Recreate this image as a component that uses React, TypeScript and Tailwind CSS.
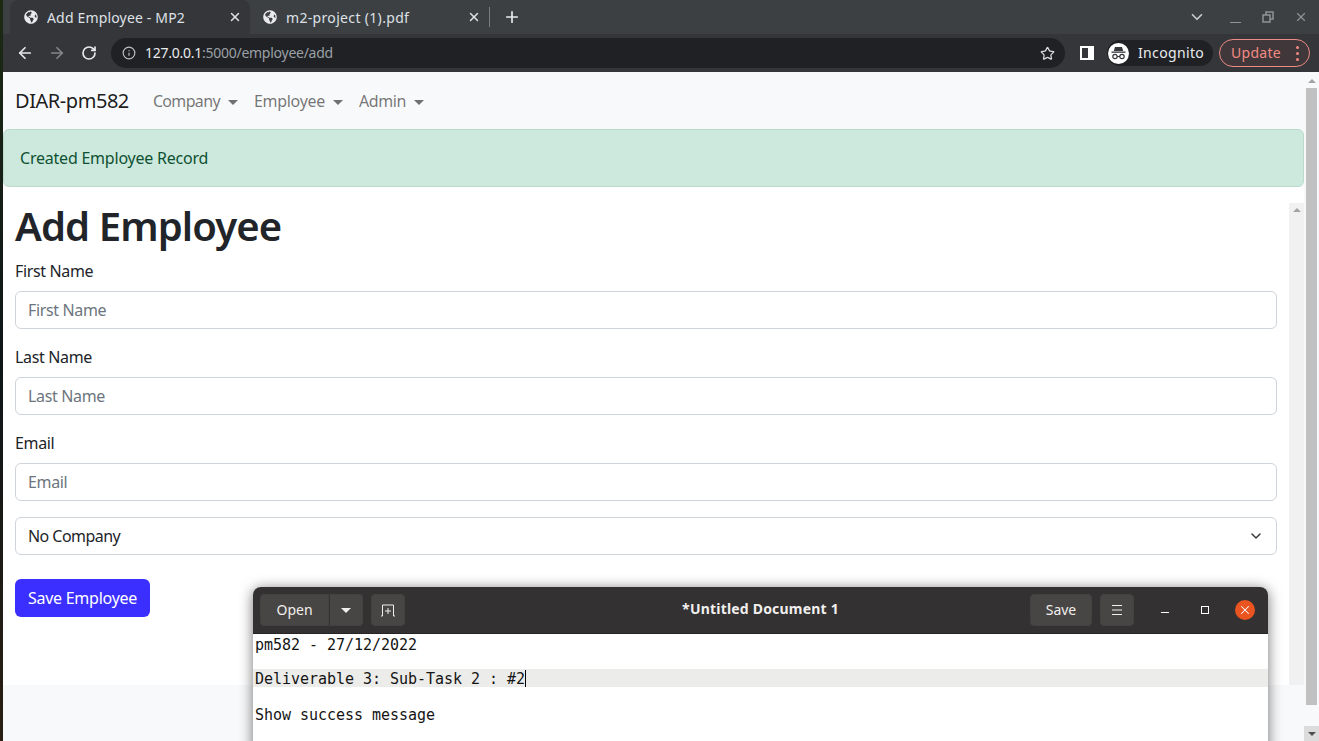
import { ArrowLeft, ArrowRight, ChevronDown, Info, Plus, RotateCw, Star, X } from 'lucide-react'
import { FaGlobeAmericas } from 'react-icons/fa'

function Caret() {
    return <span className="ml-2 inline-block w-0 h-0 border-x-[5px] border-x-transparent border-t-[5px] border-t-current align-middle" />
}

function Field({ label, top }: { label: string; top: string }) {
    return (
        <div className={top}>
            <label className="block leading-6 mb-2 text-[#212529] tracking-[-0.35px]">{label}</label>
            <input
                placeholder={label}
                className="block w-full h-[38px] px-3 bg-white border border-[#ced4da] rounded-md outline-none tracking-[-0.35px] placeholder:text-[#6c757d]"
            />
        </div>
    )
}

function TitleButton({ children, className }: { children: React.ReactNode; className: string }) {
    return (
        <div className={`h-8 flex items-center justify-center bg-[#484644] rounded-[4px] border border-[#444240] ${className}`}>
            {children}
        </div>
    )
}

export default function App() {
    return (
        <div className="relative w-[1319px] h-[741px] overflow-hidden flex bg-[#15170f] font-['Noto_Sans',sans-serif] text-[16px]">
            {/* Wallpaper sliver */}
            <div className="w-[3px] shrink-0 bg-gradient-to-b from-[#1d2a12] via-[#0e1518] to-[#2a1f12]" />

            <div className="flex-1 min-w-0 flex flex-col">
                {/* Tab strip */}
                <div className="h-[34px] flex bg-[#3c4043] text-[14px] text-[#dee1e6]">
                    <div className="ml-[7px] w-[240px] h-[34px] flex items-center pl-[14px] pr-[8px] bg-[#35363a] rounded-t-lg">
                        <FaGlobeAmericas className="w-[14px] h-[14px] text-[#e8eaed]" />
                        <span className="ml-[9px] flex-1 truncate tracking-[0.17px]">Add Employee - MP2</span>
                        <X size={14} strokeWidth={2.5} />
                    </div>
                    <div className="w-[239px] h-[34px] flex items-center pl-[13px] pr-[8px]">
                        <FaGlobeAmericas className="w-[14px] h-[14px] text-[#e8eaed]" />
                        <span className="ml-[9px] flex-1 truncate tracking-[0.33px]">m2-project (1).pdf</span>
                        <X size={14} strokeWidth={2.5} />
                    </div>
                    <div className="w-px h-5 mt-[7px] bg-[#7a7d80]" />
                    <Plus size={18} strokeWidth={2.25} className="ml-[13px] mt-2 text-[#e8eaed]" />
                    <div className="flex-1" />
                    <div className="flex items-center pr-[11px] text-[#8f9296]">
                        <ChevronDown size={18} strokeWidth={2.25} className="mr-[24px] text-[#c8cacd]" />
                        <div className="w-[11px] h-px bg-current mt-[10px] mr-[21px]" />
                        <svg width="12" height="12" viewBox="0 0 12 12" className="mr-[20px]" fill="none" stroke="currentColor" strokeWidth="1.5">
                            <rect x="4" y="1" width="7" height="7" />
                            <rect x="1" y="4" width="7" height="7" fill="#3c4043" />
                        </svg>
                        <X size={14} strokeWidth={2} />
                    </div>
                </div>

                {/* Toolbar */}
                <div className="h-[38px] flex items-center bg-[#35363a] text-[#e8eaed]">
                    <ArrowLeft size={18} strokeWidth={2.25} className="ml-[13px]" />
                    <ArrowRight size={18} strokeWidth={2.25} className="ml-[14px] text-[#85878a]" />
                    <RotateCw size={16} strokeWidth={2.5} className="ml-[15px]" />
                    <div className="ml-[14px] w-[954px] h-[30px] flex items-center rounded-full bg-[#202124] pl-[11px] pr-[10px] text-[14px]">
                        <Info size={14} className="text-[#bdc1c6]" />
                        <div className="ml-[9px] -mt-[2px] tracking-[-0.26px]">
                            <span className="text-[#e8eaed]">127.0.0.1</span>
                            <span className="text-[#9aa0a6]">:5000/employee/add</span>
                        </div>
                        <div className="flex-1" />
                        <Star size={15} strokeWidth={2} className="text-[#dadce0]" />
                    </div>
                    <div className="ml-[15px] w-[14px] h-[14px] border-[2px] border-white border-r-[6px]" />
                    <div className="ml-[13px] w-[106px] h-[26px] flex items-center rounded-full bg-[#202124] pl-[1px] text-[14px]">
                        <div className="w-[21px] h-[21px] rounded-full bg-white flex items-center justify-center">
                            <svg width="17" height="17" viewBox="0 0 17 17" fill="#35363a">
                                <path d="M5 2h7l1.2 4H3.8z" />
                                <rect x="1.5" y="6.5" width="14" height="1.3" />
                                <circle cx="5" cy="11.5" r="2.2" fill="none" stroke="#35363a" strokeWidth="1.2" />
                                <circle cx="12" cy="11.5" r="2.2" fill="none" stroke="#35363a" strokeWidth="1.2" />
                                <rect x="7" y="11" width="3" height="1" />
                            </svg>
                        </div>
                        <span className="ml-[9px] -mt-[2px] tracking-[0.35px]">Incognito</span>
                    </div>
                    <div className="ml-[6px] w-[91px] h-[28px] flex items-center rounded-full border border-[#ee8b84] bg-[#40373a] pl-[11px] text-[14px] text-[#f28b82]">
                        <span className="-mt-[2px] tracking-[0.3px]">Update</span>
                        <div className="ml-[15px] flex flex-col gap-[3px]">
                            <span className="w-[3px] h-[3px] rounded-full bg-[#f28b82]" />
                            <span className="w-[3px] h-[3px] rounded-full bg-[#f28b82]" />
                            <span className="w-[3px] h-[3px] rounded-full bg-[#f28b82]" />
                        </div>
                    </div>
                </div>

                {/* Page */}
                <div className="flex-1 min-h-0 flex bg-[#f8f9fa]">
                    <div className="flex-1 min-w-0 flex flex-col">
                        {/* Navbar */}
                        <nav className="h-[57px] flex items-center pl-3 text-[rgba(0,0,0,0.55)]">
                            <span className="text-[20px] text-[rgba(0,0,0,0.9)] mr-[24px] tracking-[-0.45px]">DIAR-pm582</span>
                            <span className="mr-4 tracking-[-0.65px]">Company<Caret /></span>
                            <span className="mr-4 tracking-[-0.3px]">Employee<Caret /></span>
                            <span className="tracking-[-0.4px]">Admin<Caret /></span>
                        </nav>

                        {/* Flash message */}
                        <div className="h-[58px] flex items-center px-4 bg-[#cde9dd] border border-[#badbcc] rounded-md text-[#0f5132] tracking-[-0.22px]">
                            Created Employee Record
                        </div>

                        {/* Form */}
                        <div className="h-[498px] flex flex-col bg-white">
                            <div className="h-4 shrink-0" />
                            <div className="flex-1 min-h-0 flex">
                                <div className="flex-1 min-w-0 pl-3 pr-3">
                                    <h1 className="text-[40px] leading-[46px] font-semibold text-[#212529] tracking-[-0.9px]">Add Employee</h1>
                                    <Field label="First Name" top="mt-[10px]" />
                                    <Field label="Last Name" top="mt-[16px]" />
                                    <Field label="Email" top="mt-[16px]" />
                                    <div className="relative mt-4">
                                        <select className="block w-full h-[38px] pl-3 bg-white border border-[#ced4da] rounded-md appearance-none text-[#212529] outline-none tracking-[-0.55px]">
                                            <option>No Company</option>
                                        </select>
                                        <ChevronDown size={16} strokeWidth={2.25} className="absolute right-[13px] top-[11px] text-[#343a40]" />
                                    </div>
                                    <button className="mt-6 h-[38px] w-[135px] bg-[#3b2fff] rounded-md text-white tracking-[-0.25px]">Save Employee</button>
                                </div>
                                <div className="w-[15px] shrink-0 bg-[#f1f1f1] flex justify-center pt-[5px]">
                                    <div className="w-0 h-0 border-x-[4px] border-x-transparent border-b-[4px] border-b-[#a3a3a3]" />
                                </div>
                            </div>
                        </div>
                        <div className="flex-1" />
                    </div>

                    {/* Page scrollbar */}
                    <div className="w-[15px] shrink-0 flex flex-col items-center pt-[7px]">
                        <div className="w-0 h-0 border-x-[4px] border-x-transparent border-b-[4px] border-b-[#a3a3a3]" />
                        <div className="mt-[5px] w-[11px] h-[617px] bg-[#c1c1c1]" />
                        <div className="mt-[21px] w-full h-[15px] bg-[#dcdcdc] flex items-center justify-center">
                            <div className="w-0 h-0 border-x-[4px] border-x-transparent border-t-[4px] border-t-[#505050]" />
                        </div>
                    </div>
                </div>
            </div>

            {/* Text editor window, floating above the browser */}
            <div className="absolute left-[253px] top-[587px] w-[1015px] h-[200px] bg-white rounded-t-[8px] shadow-[0_2px_14px_rgba(0,0,0,0.55)] overflow-hidden">
                <div className="relative h-[47px] flex items-center pl-[7px] bg-[#333131] border-b border-[#262424] text-[14px] text-[#f1efed]">
                    <TitleButton className="w-[69px] rounded-r-none"><span className="-mt-[2px]">Open</span></TitleButton>
                    <TitleButton className="w-[34px] rounded-l-none border-l-[#353331]">
                        <div className="w-0 h-0 border-x-[5px] border-x-transparent border-t-[5px] border-t-[#f1efed]" />
                    </TitleButton>
                    <TitleButton className="ml-2 w-[34px]">
                        <svg width="16" height="16" viewBox="0 0 16 16" fill="none" stroke="#f1efed" strokeWidth="1">
                            <path d="M1 14h1.5V3h11v11H15M8 6v6M5 9h6" />
                        </svg>
                    </TitleButton>
                    <div className="absolute inset-x-0 top-[12px] text-center font-bold tracking-[0.2px] leading-[20px]">*Untitled Document 1</div>
                    <TitleButton className="ml-auto w-[62px]"><span className="-mt-[2px]">Save</span></TitleButton>
                    <TitleButton className="ml-2 w-[34px]">
                        <svg width="12" height="12" viewBox="0 0 12 12" stroke="#f1efed" strokeWidth="1">
                            <path d="M1 1.5h10M1 6h10M1 10.5h10" />
                        </svg>
                    </TitleButton>
                    <div className="ml-[27px] w-2 h-px bg-white mt-[5px]" />
                    <div className="ml-[32px] w-2 h-2 border border-white" />
                    <div className="ml-[26px] mr-[13px] w-5 h-5 rounded-full bg-[#e95420] flex items-center justify-center">
                        <X size={14} strokeWidth={1.75} className="text-white" />
                    </div>
                </div>
                <div className="pt-px font-['DejaVu_Sans_Mono',monospace] text-[15px] leading-[18px] text-[#141414] pl-[2px] tracking-[-0.03px]">
                    <div className="h-[18px] pt-px">pm582 - 27/12/2022</div>
                    <div className="h-4" />
                    <div className="h-[18px] -ml-[2px] pl-[2px] bg-[#ececea] flex items-center">
                        <span className="pt-[2px]">Deliverable 3: Sub-Task 2 : #2</span>
                        <span className="w-px h-[17px] bg-black" />
                    </div>
                    <div className="h-[18px]" />
                    <div className="h-[18px] pt-px">Show success message</div>
                </div>
            </div>
        </div>
    )
}
